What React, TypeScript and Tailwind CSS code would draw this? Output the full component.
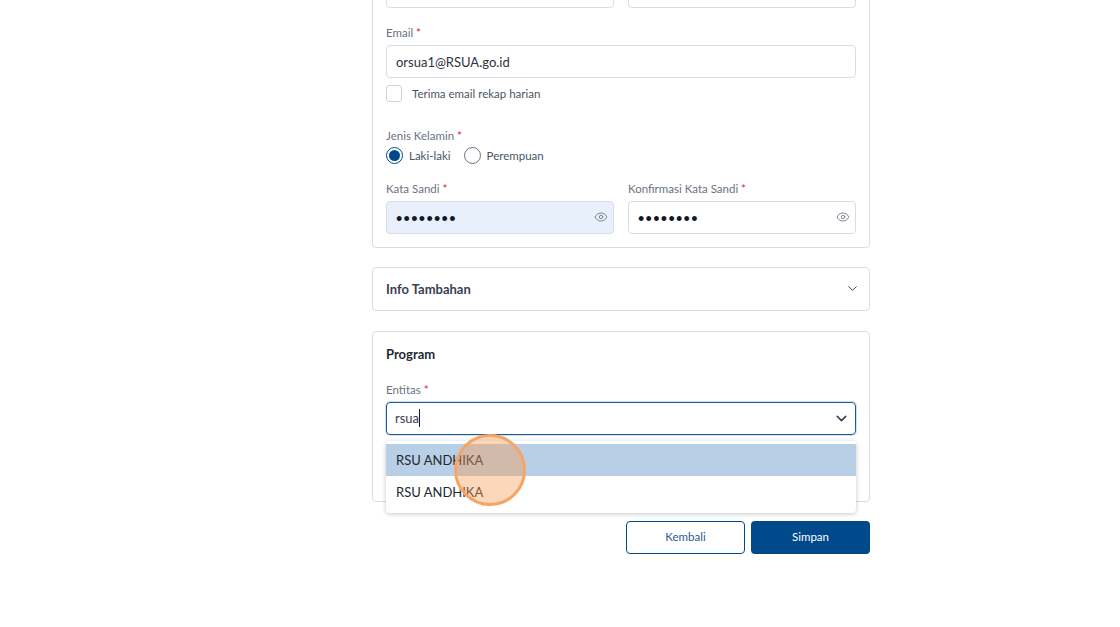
import React from 'react';
import { ChevronDown, Eye } from 'lucide-react';

const Label = ({ text }: { text: string }) => (
  <label className="block text-[11.5px] leading-[16px] text-[#6b7280]">
    {text} <span className="text-[#dc2626]">*</span>
  </label>
);

const PasswordField = ({ label, filled }: { label: string; filled?: boolean }) => (
  <div>
    <Label text={label} />
    <div
      className={`mt-[4px] flex h-[33px] items-center justify-between rounded-[4px] border border-[#d9dde2] pl-[9px] pr-[5px] ${
        filled ? 'bg-[#e8f0fb]' : 'bg-white'
      }`}
    >
      <span className="pt-[3px] font-['Liberation_Sans',sans-serif] text-[18px] leading-none tracking-[1.3px] text-[#111827]">
        ••••••••
      </span>
      <Eye size={14} strokeWidth={1.4} className="text-[#6b7280]" />
    </div>
  </div>
);

const App = () => {
  return (
    <div className="relative h-[627px] w-[1120px] overflow-hidden bg-white font-['Lato',sans-serif]">
      <div className="ml-[372px] w-[498px] -mt-[30px]">
        {/* Data diri */}
        <section className="rounded-[4px] border border-[#d9dde2] px-[13px] pb-[13px]">
          <div className="grid grid-cols-2 gap-[14px]">
            <div className="h-[37px] rounded-[4px] border border-[#d9dde2]" />
            <div className="h-[37px] rounded-[4px] border border-[#d9dde2]" />
          </div>

          <div className="mt-[17px]">
            <Label text="Email" />
            <div className="mt-[4px] flex h-[33px] items-center rounded-[4px] border border-[#d9dde2] px-[9px] pt-[2px] text-[13px] text-[#2b3440]">
              orsua1@RSUA.go.id
            </div>
          </div>

          <div className="mt-[7px] flex items-center gap-[10px]">
            <span className="h-[17px] w-[16px] rounded-[3px] border border-[#cfd4da]" />
            <span className="text-[11.5px] text-[#4b5563]">Terima email rekap harian</span>
          </div>

          <div className="mt-[26px]">
            <Label text="Jenis Kelamin" />
            <div className="mt-[3px] flex items-center text-[11.5px] text-[#4b5563]">
              <span className="flex h-[17px] w-[17px] items-center justify-center rounded-full border border-[#004a8c]">
                <span className="h-[11px] w-[11px] rounded-full bg-[#004a8c]" />
              </span>
              <span className="ml-[6px]">Laki-laki</span>
              <span className="ml-[13px] h-[17px] w-[17px] rounded-full border border-[#6b7280]" />
              <span className="ml-[6px]">Perempuan</span>
            </div>
          </div>

          <div className="mt-[16px] grid grid-cols-2 gap-[14px]">
            <PasswordField label="Kata Sandi" filled />
            <PasswordField label="Konfirmasi Kata Sandi" />
          </div>
        </section>

        {/* Info tambahan */}
        <section className="mt-[19px] flex h-[44px] items-center justify-between rounded-[4px] border border-[#d9dde2] pl-[13px] pr-[9px]">
          <h3 className="mt-[3px] text-[13px] font-bold text-[#374151]">Info Tambahan</h3>
          <ChevronDown size={15} strokeWidth={1.6} className="text-[#374151]" />
        </section>

        {/* Program */}
        <section className="relative mt-[20px] h-[171px] rounded-[4px] border border-[#d9dde2] px-[13px] pt-[13px]">
          <h3 className="text-[13px] font-bold leading-[18px] text-[#1f2937]">Program</h3>
          <div className="mt-[19px]">
            <Label text="Entitas" />
            <div className="mt-[4px] flex h-[33px] items-center justify-between rounded-[4px] border-[1.5px] border-[#1f5b8f] pl-[8px] pr-[5px] text-[13px] text-[#374151] shadow-[0_0_0_1px_rgba(31,91,143,0.2)]">
              <span className="border-r border-[#111827] leading-[18px]">rsua</span>
              <ChevronDown size={17} strokeWidth={2.2} className="text-[#374151]" />
            </div>
          </div>

          {/* dropdown hasil pencarian */}
          <div className="absolute left-[13px] right-[13px] top-[109px] z-10 rounded-[4px] bg-white pb-[5px] pt-[3px] shadow-[0_1px_5px_rgba(0,0,0,0.22)]">
            <div className="flex h-[32px] items-center bg-[#b8cfe6] pl-[10px] pr-[9px] pt-[2px] text-[13px] text-[#222831]">RSU ANDHIKA</div>
            <div className="flex h-[32px] items-center pl-[10px] pr-[9px] pt-[3px] text-[13px] text-[#222831]">RSU ANDHIKA</div>
          </div>
        </section>

        <div className="mt-[19px] flex justify-end gap-[6px]">
          <button className="h-[33px] w-[119px] rounded-[4px] border border-[#004a8c] bg-white text-[11.5px] text-[#1f5b8f]">
            Kembali
          </button>
          <button className="h-[33px] w-[119px] rounded-[4px] bg-[#004a8c] text-[11.5px] text-white">Simpan</button>
        </div>
      </div>

      {/* penanda klik */}
      <div className="absolute left-[454px] top-[434px] z-20 h-[72px] w-[72px] rounded-full border-[3px] border-[#f5a667] bg-[#f79a4f]/40" />
    </div>
  );
};

export default App;
